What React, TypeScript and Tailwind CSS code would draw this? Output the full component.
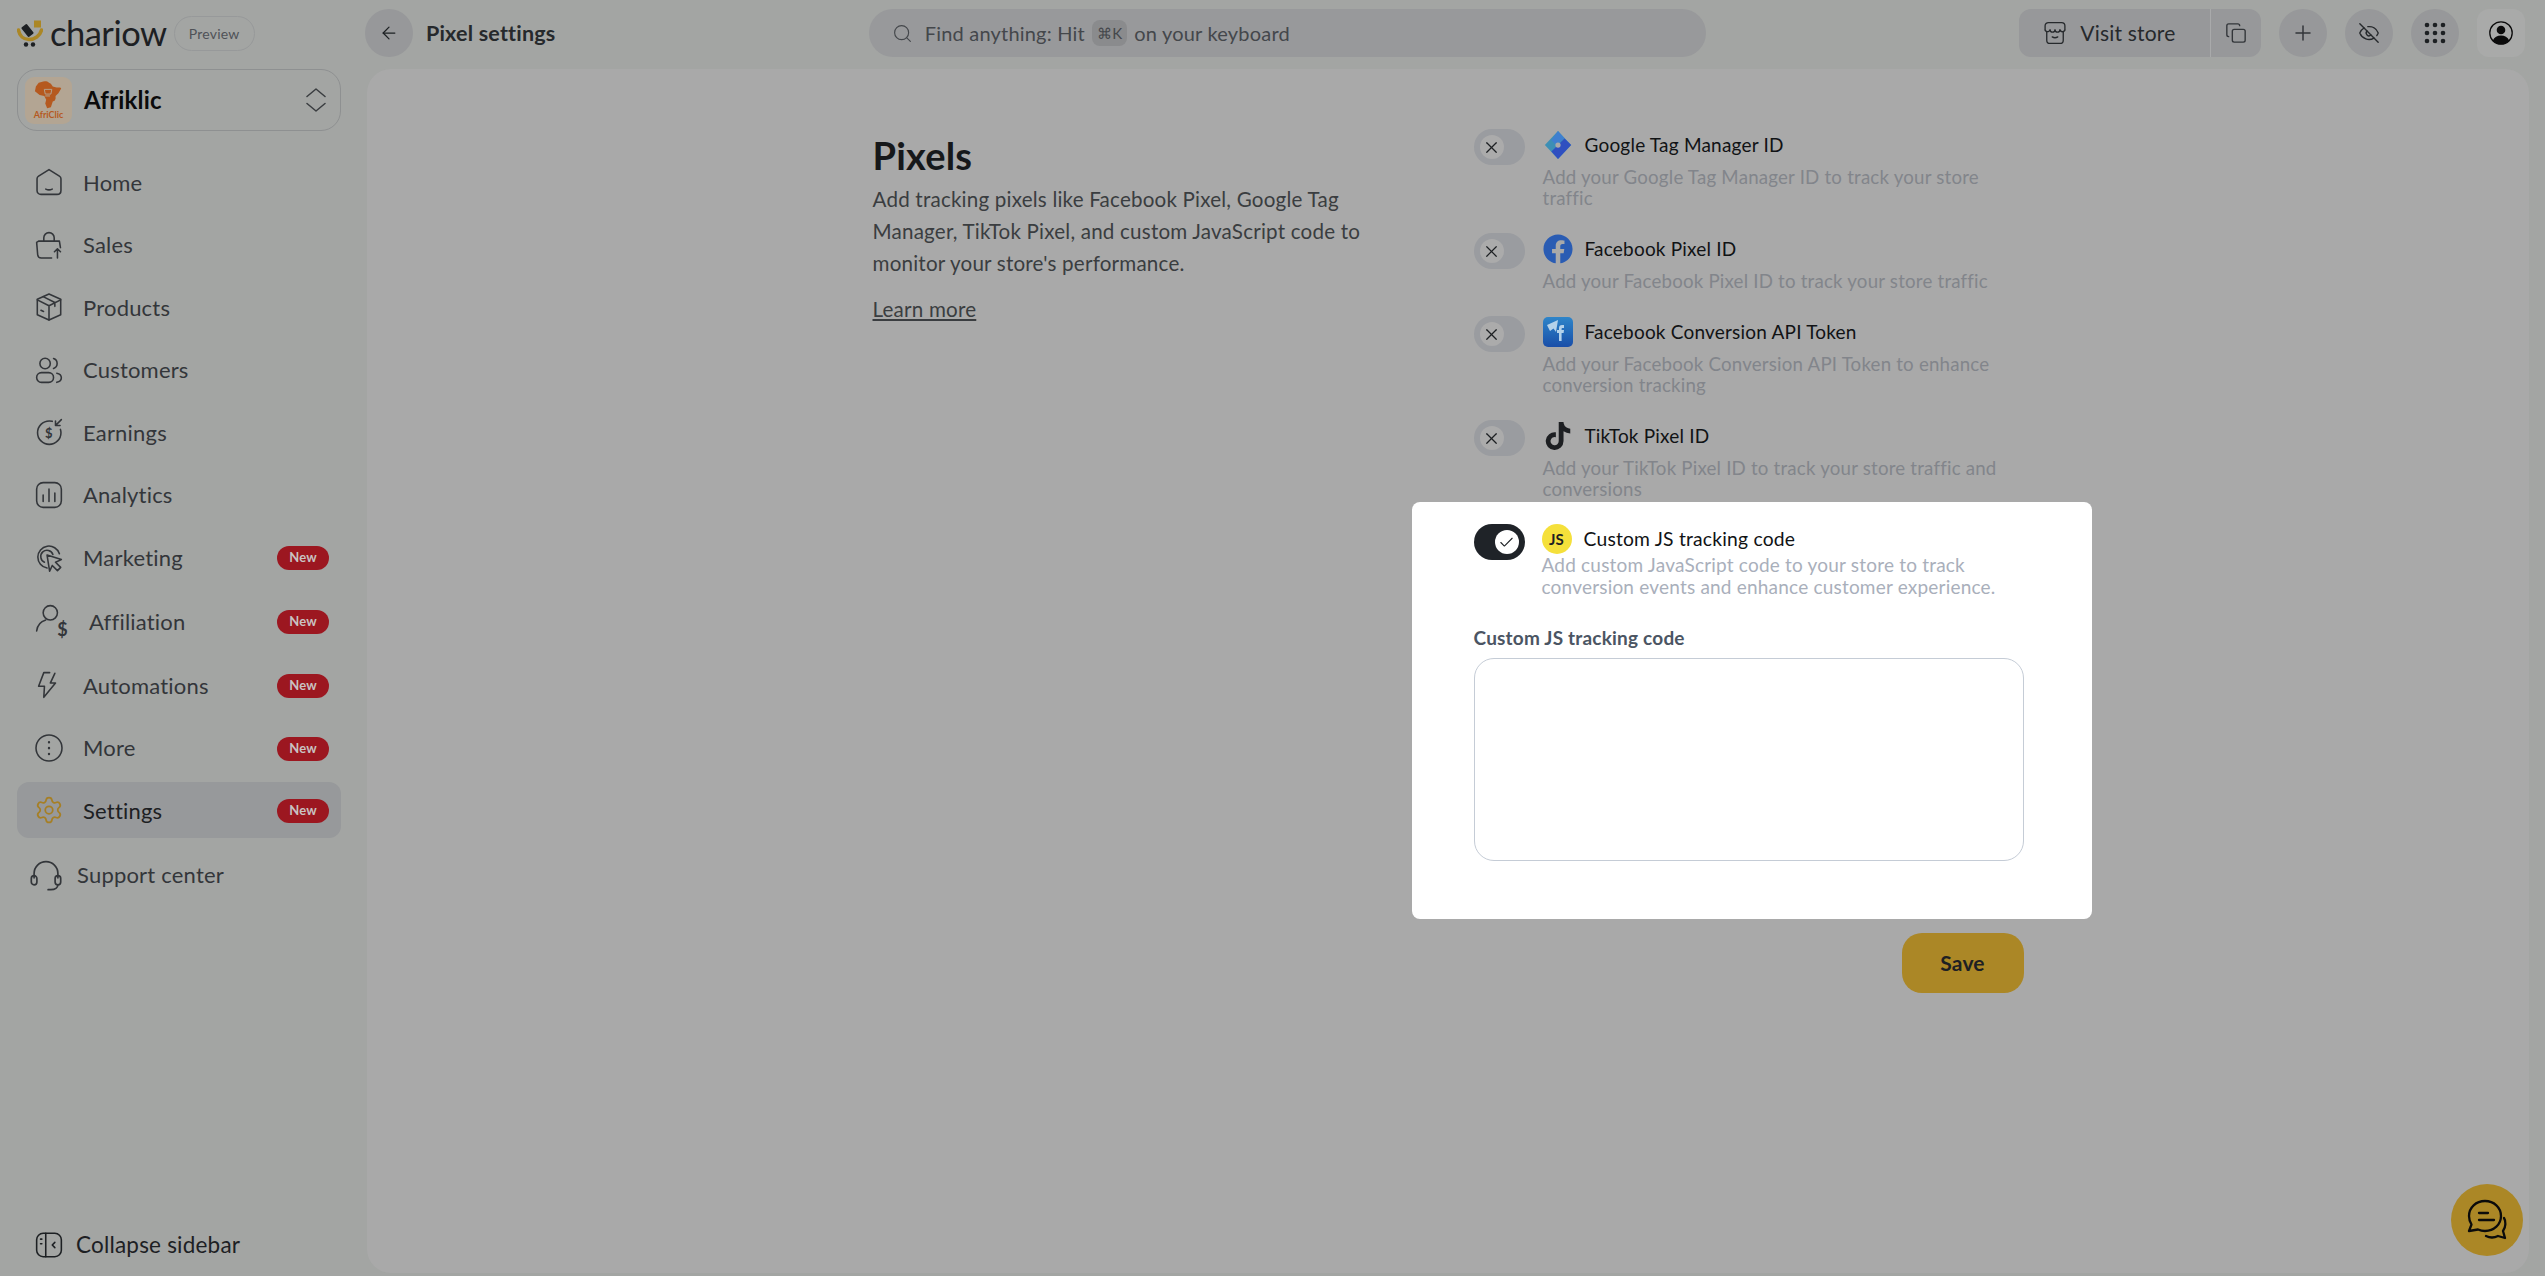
import React from "react";
import { Check, X, ArrowLeft, Search, Plus, Copy, EyeOff, Settings } from "lucide-react";
import { FaTiktok, FaFacebook } from "react-icons/fa";

const S = ({ children, className = "w-[26px] h-[26px]", sw = 1.2 }: { children: React.ReactNode; className?: string; sw?: number }) => (
  <svg viewBox="2 2 20 20" fill="none" stroke="currentColor" strokeWidth={sw} strokeLinecap="round" strokeLinejoin="round" className={className} overflow="visible">
    {children}
  </svg>
);

const HomeI = () => <S><path d="M12 2.500 20 7.500c.8.5 1.200 1.200 1.200 2v9c0 1.800-1.300 3-3 3H5.800c-1.700 0-3-1.200-3-3v-9c0-.8.4-1.500 1.200-2z" /><path d="M9.500 17.500c1.500.7 3.500.7 5 0" /></S>;
const SalesI = () => <S><path d="M4 9h16l.8 5M14 22H6c-1.500 0-2.500-1-2.700-2.500L2.500 10 4 9" /><path d="M8 9V6.500a4 4 0 0 1 8 0V9" /><path d="M18.500 22v-7M16.200 17.200l2.300-2.300 2.300 2.300" /></S>;
const BoxI = () => <S><path d="M12 2 21 6v12l-9 4-9-4V6z" /><path d="M3 6.500 12 11l9-4.500M12 11v11M7.500 4l9 4.500v3" /><path d="M5.800 14.500l2 .9" /></S>;
const UsersI = () => <S><circle cx="9" cy="7" r="4" /><path d="M15.500 3.200a4 4 0 0 1 0 7.600" /><rect x="2.500" y="14" width="13" height="7.500" rx="3.700" /><path d="M18 14.500c2 .4 3.500 1.600 3.500 3.500s-1.500 3.100-3.500 3.500" /></S>;
const EarnI = () => <S><path d="M20.800 10c.3.900.4 1.500.4 2.500a9 9 0 1 1-9-9c.9 0 1.500.1 2.300.3" /><path d="M21.500 2.500 17 7M17 3.500V7h3.500" /><text x="12" y="16.500" fontSize="10" fontWeight="700" textAnchor="middle" fill="currentColor" stroke="none" fontFamily="Lato, sans-serif">$</text></S>;
const ChartI = () => <S><rect x="2.500" y="2.500" width="19" height="19" rx="5" /><path d="M7.500 12v5M12 7.500V17M16.500 10.500V17" /></S>;
const ClickI = () => <S><path d="M10.500 20.500A8.500 8.500 0 1 1 20 9.500" /><path d="M8.500 16a4.800 4.800 0 1 1 6.500-6" /><path d="m10.500 10.500 11 3.500-4.500 2 4 4-2.500 2.500-4-4-2 4.500z" /></S>;
const AffI = () => (
  <span className="relative block w-[32px] h-[32px]">
    <S className="absolute left-0 top-0 w-[26px] h-[26px]"><circle cx="13" cy="8" r="5.500" /><path d="M2.500 22c.5-4.500 3.500-7.500 7-8.500" /></S>
    <span className="absolute right-0 bottom-[-1px] text-[18px] leading-none font-bold text-[#33363a]">$</span>
  </span>
);
const ZapI = () => <S><path d="M12.500 2.500H8L4 13h4.500l-.5 8.500L17 10.500h-4L16.500 3" /></S>;
const MoreI = () => <S><circle cx="12" cy="12" r="10" /><path d="M12 7.500v.1M12 12v.1M12 16.500v.1" strokeWidth="1.800" /></S>;
const GearI = () => <Settings className="-m-[2px] h-[30px] w-[30px]" strokeWidth={1.4} />;
const HeadI = () => <S className="w-[28px] h-[28px]"><path d="M3.500 14v-3a8.500 8.500 0 0 1 17 0v3" /><rect x="1.500" y="12.500" width="4" height="6.500" rx="2" /><rect x="18.500" y="12.500" width="4" height="6.500" rx="2" /><path d="M20.500 19c0 2-2 3.500-5 3.500h-2" /></S>;
const CollapseI = () => <S><rect x="2.500" y="3" width="19" height="18" rx="5" /><path d="M9.500 3v18M5.500 7.500h1M5.500 11h1M16.500 10l-2 2 2 2" /></S>;
const StoreI = () => <S className="w-[22px] h-[22px]"><path d="M4.500 11v7.500a3 3 0 0 0 3 3h9a3 3 0 0 0 3-3V11" /><path d="M6 2.500h12a3 3 0 0 1 3 3V8a2.200 2.200 0 0 1-4.500 1 2.200 2.200 0 0 1-4.500 0 2.200 2.200 0 0 1-4.500 0A2.200 2.200 0 0 1 3 8V5.500a3 3 0 0 1 3-3z" /><path d="M9.500 15.500c1.500 1 3.500 1 5 0" /></S>;
const GridI = () => (
  <svg viewBox="0 0 22 22" className="w-[22px] h-[22px] fill-[#1d2023]">
    {[3, 11, 19].flatMap((y) => [3, 11, 19].map((x) => <circle key={`${x}-${y}`} cx={x} cy={y} r="2.300" />))}
  </svg>
);
const UserCircleI = () => (
  <svg viewBox="0 0 24 24" className="w-[24px] h-[24px]">
    <circle cx="12" cy="12" r="11.200" fill="none" stroke="#0b0b0b" strokeWidth="1.300" />
    <circle cx="12" cy="9" r="4.300" fill="#0b0b0b" />
    <path d="M3.800 19.500c1.500-3.500 4.500-5 8.200-5s6.700 1.500 8.200 5a11 11 0 0 1-16.400 0z" fill="#0b0b0b" />
  </svg>
);
const Logo = () => (
  <svg viewBox="0 0 26 27" className="w-[26px] h-[27px] shrink-0">
    <path d="M1.500 10c1 6 5 9.500 10.500 9.500S23 16 24.500 10" fill="none" stroke="#ab8726" strokeWidth="3.500" strokeLinecap="round" />
    <rect x="7" y="4.500" width="7" height="12" rx="1" fill="#1d2023" transform="rotate(-38 10.500 10.500)" />
    <rect x="17" y="0.500" width="7" height="7" fill="#ab8726" />
    <circle cx="9" cy="24.500" r="2.200" fill="#1d2023" />
    <circle cx="16" cy="24.500" r="2.200" fill="#1d2023" />
  </svg>
);
const Africa = () => (
  <svg viewBox="0 0 32 32" className="w-[30px] h-[30px]">
    <path d="M8 2c3-1 6-1 8 1l2 1 2 3 4 1h4l1 1-3 5-3 3v3l-1 2-2 1-2 6-4 1-2-5 1-4-2-4-5-1-5-4 1-5 3-4z" fill="#b5591f" />
    <path d="M11 10h8l-1 5h-6zM12 17h5" fill="none" stroke="#b3a593" strokeWidth="1" />
  </svg>
);
const TagManager = () => (
  <svg viewBox="0 0 30 32" className="w-[30px] h-[30px]">
    <path d="M15 1 29 16 15 31 1 16z" fill="#3d8fb5" />
    <path d="M15 1l7 8-9 7-5-5z" fill="#3f7fd0" />
    <path d="M29 16 15 31l-7-8 14-14z" fill="#2f4fc0" />
    <circle cx="15" cy="16" r="2.800" fill="#a9a9a9" />
  </svg>
);
const FbConv = () => (
  <span className="flex w-[30px] h-[30px] items-center justify-center rounded-[5px] bg-gradient-to-b from-[#2f85c9] to-[#1a4ea8]">
    <svg viewBox="0 0 30 30" className="w-[30px] h-[30px]">
      <path d="M4 8 15 3l-2 12-2.500-3.500L7 14z" fill="#b4d2ea" />
      <path d="M16 24v-8h-2v-3h2v-2c0-2 1-3 3-3h2v3h-1.500c-.7 0-.9.300-.9 1v1H21l-.4 3h-2v8z" fill="#b4d2ea" />
    </svg>
  </span>
);

const nav = [
  { label: "Home", Icon: HomeI },
  { label: "Sales", Icon: SalesI },
  { label: "Products", Icon: BoxI },
  { label: "Customers", Icon: UsersI },
  { label: "Earnings", Icon: EarnI },
  { label: "Analytics", Icon: ChartI },
  { label: "Marketing", Icon: ClickI, badge: true },
  { label: "Affiliation", Icon: AffI, badge: true, tall: true },
  { label: "Automations", Icon: ZapI, badge: true },
  { label: "More", Icon: MoreI, badge: true },
  { label: "Settings", Icon: GearI, badge: true, active: true },
];

const pixels = [
  { title: "Google Tag Manager ID", desc: "Add your Google Tag Manager ID to track your store traffic", icon: <TagManager /> },
  { title: "Facebook Pixel ID", desc: "Add your Facebook Pixel ID to track your store traffic", icon: <FaFacebook className="w-[30px] h-[30px] text-[#2a5cb3]" /> },
  { title: "Facebook Conversion API Token", desc: "Add your Facebook Conversion API Token to enhance conversion tracking", icon: <FbConv /> },
  { title: "TikTok Pixel ID", desc: "Add your TikTok Pixel ID to track your store traffic and conversions", icon: <FaTiktok className="w-[26px] h-[28px] text-[#1d1f22]" /> },
];

export default function App() {
  return (
    <div className="flex h-screen overflow-hidden bg-[#a3a5a3] text-[#1d2023] font-['Lato',sans-serif] tracking-[0.2px]">
      <aside className="flex w-[367px] shrink-0 flex-col pb-[3px] pl-[17px] pr-[26px]">
        <div className="flex h-[69px] shrink-0 items-center pb-[3px]">
          <Logo />
          <span className="ml-[7px] text-[34.5px] leading-none text-[#1d2023] tracking-[-0.5px]">chariow</span>
          <span className="ml-[7px] flex h-[35px] w-[81px] items-center justify-center rounded-full border border-[#97999a] text-[14px] text-[#4f5257]">Preview</span>
        </div>
        <div className="flex h-[62px] shrink-0 items-center rounded-[20px] border border-[#8e9091] pl-[7px] pr-[14px]">
          <div className="flex h-[47px] w-[47px] flex-col items-center justify-center rounded-[9px] bg-[#b3a593]">
            <Africa />
            <span className="text-[9px] font-bold leading-[10px] text-[#b5591f] tracking-normal">AfriClic</span>
          </div>
          <span className="ml-[12px] flex-1 text-[24px] font-bold text-[#0b0b0b]">Afriklic</span>
          <svg viewBox="0 0 20 24" className="h-[24px] w-[20px] fill-none stroke-[#3a3d40] stroke-[1.5]">
            <path d="M1 8.500 10 1l9 7.500M1 15.500l9 7.500 9-7.500" strokeLinecap="round" strokeLinejoin="round" />
          </svg>
        </div>
        <nav className="mt-[23px] flex flex-col gap-[6.5px]">
          {nav.map(({ label, Icon, badge, active, tall }) => (
            <div key={label} className={`flex shrink-0 items-center rounded-[12px] pl-[19px] pr-[12px] ${tall ? "h-[59px]" : "h-[56px]"} ${active ? "bg-[#97999b] text-[#1d2023]" : "text-[#33363a]"}`}>
              <span className={`flex shrink-0 ${active ? "text-[#a67f25]" : "text-[#33363a]"} ${tall ? "w-[38px]" : "w-[26px]"}`}>
                <Icon />
              </span>
              <span className={`flex-1 text-[22px] ${tall ? "ml-[15px]" : "ml-[21px]"}`}>{label}</span>
              {badge && <span className="mt-[2px] flex h-[24px] w-[52px] items-center justify-center rounded-full bg-[#9c1720] text-[13px] font-bold text-[#c9c2c2]">New</span>}
            </div>
          ))}
          <div className="flex h-[60px] shrink-0 items-center pl-[15px] text-[#33363a]">
            <span className="flex w-[28px] text-[#33363a]"><HeadI /></span>
            <span className="ml-[17px] text-[22px]">Support center</span>
          </div>
        </nav>
        <div className="mt-auto flex h-[56px] shrink-0 items-center pl-[19px]">
          <span className="flex w-[26px] text-[#1d2023]"><CollapseI /></span>
          <span className="ml-[14px] text-[22.5px] text-[#1d2023]">Collapse sidebar</span>
        </div>
      </aside>

      <div className="flex min-w-0 flex-1 flex-col">
        <header className="-ml-[2px] flex h-[69px] shrink-0 items-center pb-[3px] pr-[20px]">
          <button className="flex h-[48px] w-[48px] items-center justify-center rounded-full bg-[#97989a]">
            <ArrowLeft className="h-[20px] w-[20px] text-[#1d2023]" strokeWidth={1.5} />
          </button>
          <span className="ml-[13px] w-[443px] text-[21.5px] font-bold text-[#26292c]">Pixel settings</span>
          <div className="flex h-[48px] w-[838px] items-center rounded-full bg-[#98999b] pl-[23px] text-[20px] text-[#44474b]">
            <Search className="h-[21px] w-[21px]" strokeWidth={1.3} />
            <span className="ml-[12px]">Find anything: Hit</span>
            <span className="mx-[7px] flex h-[26px] items-center rounded-[8px] bg-[#8a8b8d] px-[5px] text-[15px]">⌘K</span>
            <span>on your keyboard</span>
          </div>
          <div className="ml-[313px] flex h-[48px] w-[242px] items-center rounded-[12px] bg-[#97989a]">
            <span className="ml-[25px] flex text-[#26292c]"><StoreI /></span>
            <span className="ml-[14px] w-[130px] text-[21px] text-[#26292c]">Visit store</span>
            <span className="h-[48px] w-[1px] bg-[#a9aaab]" />
            <Copy className="ml-[14px] h-[22px] w-[22px] text-[#33363a]" strokeWidth={1.5} />
          </div>
          <button className="ml-[18px] flex h-[48px] w-[48px] items-center justify-center rounded-full bg-[#97989a]"><Plus className="h-[24px] w-[24px] text-[#33363a]" strokeWidth={1.5} /></button>
          <button className="ml-[18px] flex h-[48px] w-[48px] items-center justify-center rounded-full bg-[#97989a]"><EyeOff className="h-[22px] w-[22px] text-[#26292c]" strokeWidth={1.5} /></button>
          <button className="ml-[18px] flex h-[48px] w-[48px] items-center justify-center rounded-full bg-[#97989a]"><GridI /></button>
          <button className="ml-[18px] flex h-[48px] w-[48px] items-center justify-center rounded-[12px] bg-[#a9aaa9]"><UserCircleI /></button>
        </header>

        <main className="relative mb-[3px] mr-[16px] flex-1 rounded-[24px] bg-[#a9a9a9] pt-[60px]">
          <div className="mx-auto flex w-[1151px] items-start">
            <section className="w-[601px] pt-[4px]">
              <h1 className="text-[38px] font-bold leading-[44px] text-[#16181a]">Pixels</h1>
              <p className="mt-[6px] w-[495px] text-[20.6px] leading-[32px] text-[#3a3d40]">Add tracking pixels like Facebook Pixel, Google Tag Manager, TikTok Pixel, and custom JavaScript code to monitor your store's performance.</p>
              <a className="mt-[16px] block text-[20.6px] leading-[28px] text-[#3a3d40] underline underline-offset-2">Learn more</a>
            </section>
            <section className="w-[550px]">
              <div className="flex flex-col gap-[24px]">
                {pixels.map((p) => (
                  <div key={p.title} className="flex items-start">
                    <span className="relative flex h-[36px] w-[51px] shrink-0 items-center rounded-full bg-[#9a9ca0] pl-[6px]">
                      <span className="flex h-[24px] w-[24px] items-center justify-center rounded-full bg-[#ababab]"><X className="h-[19px] w-[19px] text-[#1d2023]" strokeWidth={1.5} /></span>
                    </span>
                    <div className="ml-[18px] w-[470px]">
                      <div className="flex h-[38px] items-center gap-[12px] pb-[6px]">
                        <span className="flex w-[30px] shrink-0 justify-center">{p.icon}</span>
                        <span className="text-[19px] text-[#111315]">{p.title}</span>
                      </div>
                      <p className="text-[18.7px] leading-[21px] text-[#82858b]">{p.desc}</p>
                    </div>
                  </div>
                ))}
              </div>
              <div className="relative -ml-[62px] -mr-[68px] mt-[2px] rounded-[8px] bg-white pb-[58px] pl-[62px] pr-[68px] pt-[22px]">
                <div className="flex items-start">
                  <span className="flex h-[36px] w-[51px] shrink-0 items-center justify-end rounded-full bg-[#1f2328] pr-[6px]">
                    <span className="flex h-[24px] w-[24px] items-center justify-center rounded-full bg-white"><Check className="h-[17px] w-[17px] text-[#1d2023]" strokeWidth={1.5} /></span>
                  </span>
                  <div className="ml-[17px] w-[481px]">
                    <div className="flex h-[30px] items-center gap-[12px]">
                      <span className="flex h-[30px] w-[30px] items-center justify-center rounded-full bg-[#f5e03b] text-[15px] font-bold text-[#1d2023]">JS</span>
                      <span className="text-[19.3px] text-[#111315]">Custom JS tracking code</span>
                    </div>
                    <p className="text-[19px] leading-[22px] text-[#a9afbb]">Add custom JavaScript code to your store to track conversion events and enhance customer experience.</p>
                  </div>
                </div>
                <label className="mt-[28px] block text-[19px] font-bold leading-[24px] text-[#4b5563]">Custom JS tracking code</label>
                <textarea className="mt-[8px] block h-[203px] w-full resize-none rounded-[20px] border border-[#c5ccd6] bg-white" />
              </div>
              <div className="mt-[14px] flex justify-end">
                <button className="h-[60px] w-[122px] rounded-[20px] bg-[#ab8726] text-[21px] font-bold text-[#1d2023]">Save</button>
              </div>
            </section>
          </div>
          <button className="absolute bottom-[17px] right-[6px] flex h-[72px] w-[72px] items-center justify-center rounded-full bg-[#ab8726]">
            <svg viewBox="0 0 44 44" className="h-[44px] w-[44px] fill-none stroke-[#0b0b0b] stroke-[2.300]" strokeLinecap="round" strokeLinejoin="round">
              <path d="M20 3c9 0 16 6.500 16 15s-7 15-16 15c-3 0-5-.6-7-1.500L4 33l2.500-6.500C5 24 4 21.500 4 18 4 9.500 11 3 20 3z" />
              <path d="M14 15h9M14 22h15" />
              <path d="M39 20c2 3 2 9-1 13l2 7-7-2c-3 1.500-8 2-12 0" />
            </svg>
          </button>
        </main>
      </div>
    </div>
  );
}
